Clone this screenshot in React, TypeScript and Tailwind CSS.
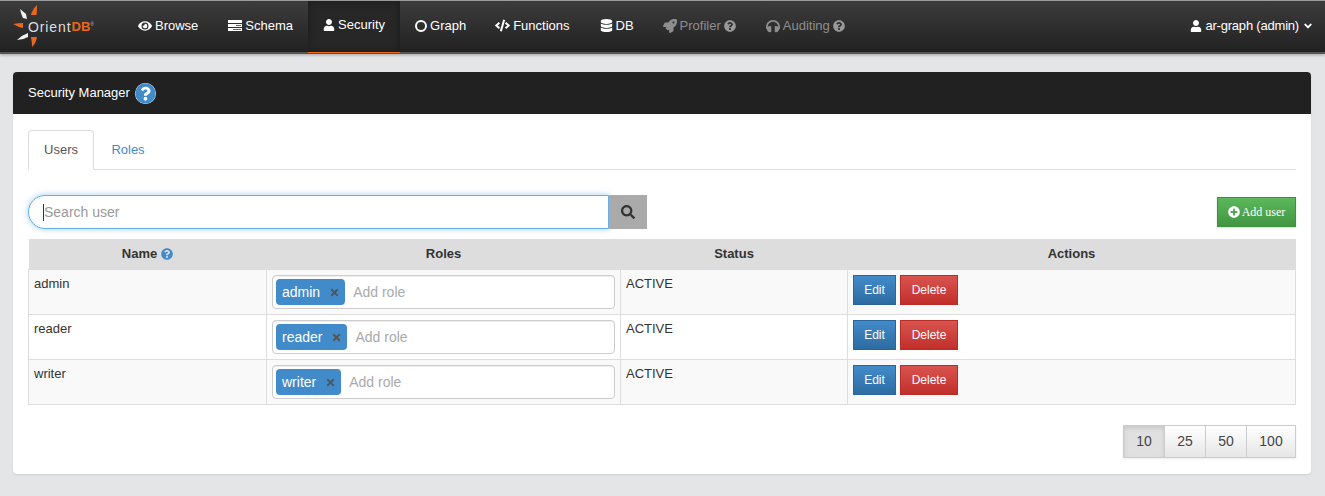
import React from "react";
import { FaEye, FaUser, FaCode, FaDatabase, FaRocket, FaQuestionCircle, FaHeadphones, FaSearch, FaPlusCircle, FaTimes, FaAngleDown } from "react-icons/fa";

function Logo() {
  return (
    <div className="relative w-[108px] h-[51px] shrink-0">
      <svg width="40" height="50" viewBox="0 0 40 50" className="absolute left-[10px] top-[3px]">
        <path d="M27 1 Q27 7 26.5 11 L21 11 Q22 6 27 1 Z" fill="#e8691d" />
        <path d="M10 5 L16 10 L17 15 L13 14 Q11 10 10 5 Z" fill="#f2f2f2" />
        <path d="M3 20 Q8 19 13 19 L13 24 Q8 23 3 20 Z" fill="#e8691d" />
        <path d="M7 36 Q12 31 18 29 L18 33 Q13 36 7 36 Z" fill="#f2f2f2" />
        <path d="M21 33 L27 33 Q26 39 22 43 Q22 38 21 33 Z" fill="#e8691d" />
      </svg>
      <div className="absolute left-[28px] top-[16px] flex text-[14px] leading-[20px]">
        <span className="text-[#dddddd] font-light tracking-[0.9px]">Orient</span>
        <span className="text-[#e8691d] font-bold text-[13px]">DB</span>
        <span className="text-[#bbbbbb] text-[5px] leading-[14px]">®</span>
      </div>
    </div>
  );
}

function SchemaIcon() {
  return (
    <svg width="14" height="12" viewBox="0 0 14 12" className="shrink-0">
      <rect x="0" y="0" width="14" height="3" fill="#fff" />
      <rect x="0" y="4" width="14" height="3" fill="#fff" />
      <rect x="8" y="5" width="5" height="1" fill="#666" />
      <rect x="0" y="8" width="14" height="3" fill="#fff" />
      <rect x="5" y="9" width="8" height="1" fill="#666" />
    </svg>
  );
}

function NavItem({ icon, label, active, muted, help, extra = "" }: { icon: React.ReactNode; label: string; active?: boolean; muted?: boolean; help?: boolean; extra?: string }) {
  return (
    <div className={`h-[52px] px-[15px] pb-[3px] flex items-center gap-[3px] text-[13px] ${muted ? "text-[#8e8e8e]" : "text-white"} ${active ? "bg-[#272727] border-b border-[#e8691d] shadow-[inset_0_0_8px_rgba(0,0,0,0.3)]" : ""} ${extra}`}>
      {icon}
      <span>{label}</span>
      {help && <FaQuestionCircle className="text-[12px] text-[#9a9a9a]" />}
    </div>
  );
}

function RoleRow({ name, odd }: { name: string; odd: boolean }) {
  return (
    <tr className={odd ? "bg-[#f9f9f9]" : "bg-white"}>
      <td className="border border-[#dddddd] px-[5px] pt-[4px] align-top h-[45px]">{name}</td>
      <td className="border border-[#dddddd] px-[5px] pt-[5px] align-top">
        <div className="flex items-center h-[34px] border border-[#cccccc] rounded-[4px] bg-white pl-[3px] shadow-[inset_0_1px_1px_rgba(0,0,0,0.075)]">
          <span className="flex items-center h-[26px] pt-[1px] rounded-[4px] bg-[#428bca] text-white text-[14px] pl-[6px] pr-[5px] gap-[9px]">
            {name}
            <FaTimes className="text-[11px] text-[#555555]" />
          </span>
          <span className="ml-[8px] pt-[1px] text-[14px] text-[#aaaaaa]">Add role</span>
        </div>
      </td>
      <td className="border border-[#dddddd] px-[5px] pt-[4px] align-top">ACTIVE</td>
      <td className="border border-[#dddddd] px-[5px] pt-[5px] align-top">
        <div className="flex gap-[4px]">
          <button className="h-[30px] w-[43px] text-[12px] text-white border border-[#2b669a] bg-gradient-to-b from-[#428bca] to-[#2d6ca2]">Edit</button>
          <button className="h-[30px] w-[58px] text-[12px] text-white border border-[#b92c28] bg-gradient-to-b from-[#d9534f] to-[#c12e2a]">Delete</button>
        </div>
      </td>
    </tr>
  );
}

export default function App() {
  return (
    <div className="h-[496px] bg-[#e4e5e7] text-[#333333] text-[13px] overflow-hidden font-['Liberation_Sans',Arial,sans-serif]">
      <nav className="h-[54px] flex items-start border-t border-b-2 border-t-[#9a9a9a] border-b-[#555555] bg-gradient-to-b from-[#3c3c3c] to-[#222222] shadow-[0_1px_3px_rgba(0,0,0,0.3)] pr-[11px]">
        <div className="flex w-[123px]"><Logo /></div>
        <NavItem icon={<FaEye className="text-[14px]" />} label="Browse" />
        <NavItem icon={<SchemaIcon />} label="Schema" />
        <NavItem icon={<FaUser className="text-[12px]" />} label="Security" active />
        <NavItem icon={<span className="w-[12px] h-[12px] rounded-full border-2 border-white" />} label="Graph" extra="pr-[14px]" />
        <NavItem icon={<FaCode className="text-[15px]" />} label="Functions" />
        <NavItem icon={<FaDatabase className="text-[13px]" />} label="DB" extra="pr-[14px]" />
        <NavItem icon={<FaRocket className="text-[14px]" />} label="Profiler" muted help />
        <NavItem icon={<FaHeadphones className="text-[14px]" />} label="Auditing" muted help />
        <div className="ml-auto h-[52px] pb-[3px] flex items-center gap-[3px] text-[13px] text-white">
          <FaUser className="text-[12px]" />
          <span className="tracking-[-0.2px]">ar-graph (admin)</span>
          <FaAngleDown className="text-[12px]" />
        </div>
      </nav>

      <main className="mx-[13px] mt-[18px] mr-[14px] h-[402px] bg-white rounded-[4px] shadow-[0_1px_2px_rgba(0,0,0,0.1)] overflow-hidden">
        <div className="h-[42px] bg-[#212121] flex items-center pl-[15px] gap-[5px] text-white text-[13px]">
          <span>Security Manager</span>
          <FaQuestionCircle className="text-[21px] text-[#428bca] bg-white rounded-full" />
        </div>
        <div className="px-[15px] pt-[16px]">
          <div className="flex h-[40px] border-b border-[#dddddd] text-[13px]">
            <div className="h-[40px] w-[66px] flex items-center justify-center border border-[#dddddd] border-b-white rounded-t-[4px] bg-white text-[#555555]">Users</div>
            <div className="h-[40px] w-[68px] flex items-center justify-center text-[#428bca]">Roles</div>
          </div>
          <div className="flex items-start mt-[25px] h-[44px]">
            <div className="w-[581px] h-[34px] flex items-center bg-white border border-[#66afe9] rounded-l-[17px] pl-[14px] shadow-[0_0_6px_rgba(102,175,233,0.6)]">
              <span className="w-px h-[17px] bg-[#333333]" />
              <span className="text-[14px] text-[#999999]">Search user</span>
            </div>
            <div className="w-[38px] h-[34px] bg-[#aaaaaa] flex items-center justify-center">
              <FaSearch className="text-[14px] text-[#333333]" />
            </div>
            <button className="ml-auto mt-[2px] h-[30px] w-[79px] flex items-center justify-center gap-[2px] text-white text-[12px] font-['Liberation_Serif',serif] border border-[#3e8f3e] bg-gradient-to-b from-[#5cb85c] to-[#419641] shadow-[0_1px_2px_rgba(0,0,0,0.15)]">
              <FaPlusCircle className="text-[12px]" />
              Add user
            </button>
          </div>
          <table className="w-[1268px] table-fixed border-collapse text-[13px]">
            <colgroup>
              <col className="w-[238px]" />
              <col className="w-[354px]" />
              <col className="w-[227px]" />
              <col />
            </colgroup>
            <thead>
              <tr className="bg-[#dddddd] h-[30px] text-[13px] font-bold">
                <th><span className="inline-flex items-center gap-[4px]">Name <FaQuestionCircle className="text-[12px] text-[#428bca]" /></span></th>
                <th>Roles</th>
                <th>Status</th>
                <th>Actions</th>
              </tr>
            </thead>
            <tbody>
              <RoleRow name="admin" odd />
              <RoleRow name="reader" odd={false} />
              <RoleRow name="writer" odd />
            </tbody>
          </table>
          <div className="flex justify-end mt-[20px]">
            <div className="flex h-[33px] text-[14px] text-[#444444] shadow-[0_1px_2px_rgba(0,0,0,0.08)]">
              {[
                ["10", "w-[42px] bg-[#e0e0e0] shadow-[inset_0_2px_4px_rgba(0,0,0,0.12)]"],
                ["25", "w-[42px] -ml-px bg-gradient-to-b from-white to-[#e6e6e6]"],
                ["50", "w-[42px] -ml-px bg-gradient-to-b from-white to-[#e6e6e6]"],
                ["100", "w-[50px] -ml-px bg-gradient-to-b from-white to-[#e6e6e6]"],
              ].map(([label, cls]) => (
                <div key={label} className={`flex items-center justify-center border border-[#cccccc] ${cls}`}>{label}</div>
              ))}
            </div>
          </div>
        </div>
      </main>
    </div>
  );
}
